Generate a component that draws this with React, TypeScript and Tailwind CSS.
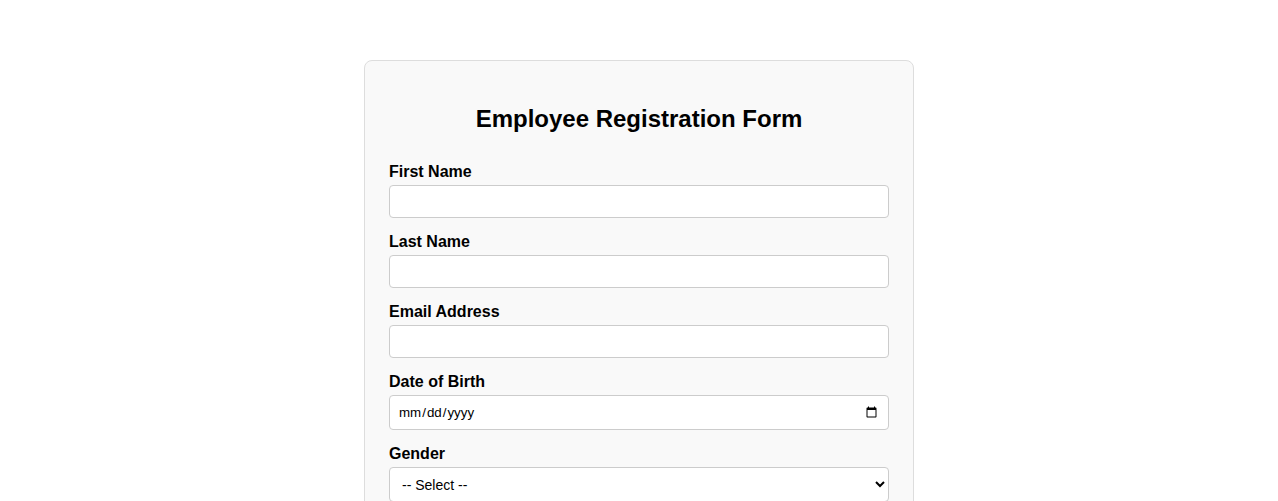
export default function App() {
  const inputCls =
    "block w-full h-[33px] px-[8px] border border-[#ccc] rounded-[4px] bg-white text-[13.33px] text-black outline-none";
  const labelCls =
    "block mt-[15px] mb-[4px] text-[16px] leading-[18px] font-bold text-black";

  return (
    <div className="min-h-screen bg-white font-['Liberation_Sans',Arial,sans-serif] pt-[60px] pb-10">
      {/* card */}
      <div className="w-[550px] mx-auto bg-[#f9f9f9] border border-[#ddd] rounded-[8px] p-[24px]">
        <h2 className="mt-[20px] mb-[15px] text-center text-[24px] leading-[28px] font-bold text-black">
          Employee Registration Form
        </h2>

        <form className="flex flex-col">
          <label className={labelCls}>First Name</label>
          <input type="text" className={inputCls} />

          <label className={labelCls}>Last Name</label>
          <input type="text" className={inputCls} />

          <label className={labelCls}>Email Address</label>
          <input type="email" className={inputCls} />

          <label className={labelCls}>Date of Birth</label>
          <input
            type="date"
            className="block w-full h-[35px] px-[8px] border border-[#ccc] rounded-[4px] bg-white text-[13.33px] text-black outline-none"
          />

          <label className={labelCls}>Gender</label>
          <select className="block w-full h-[35px] px-[8px] border border-[#ccc] rounded-[4px] bg-white text-[14px] text-black outline-none">
            <option>-- Select --</option>
            <option>Male</option>
            <option>Female</option>
            <option>Other</option>
          </select>

          <label className={labelCls}>Department</label>
          <input type="text" className={inputCls} />

          <button
            type="button"
            className="mt-[20px] h-[40px] w-full rounded-[4px] bg-[#28a745] text-white font-bold text-[16px]"
          >
            Register
          </button>
        </form>
      </div>
    </div>
  );
}
